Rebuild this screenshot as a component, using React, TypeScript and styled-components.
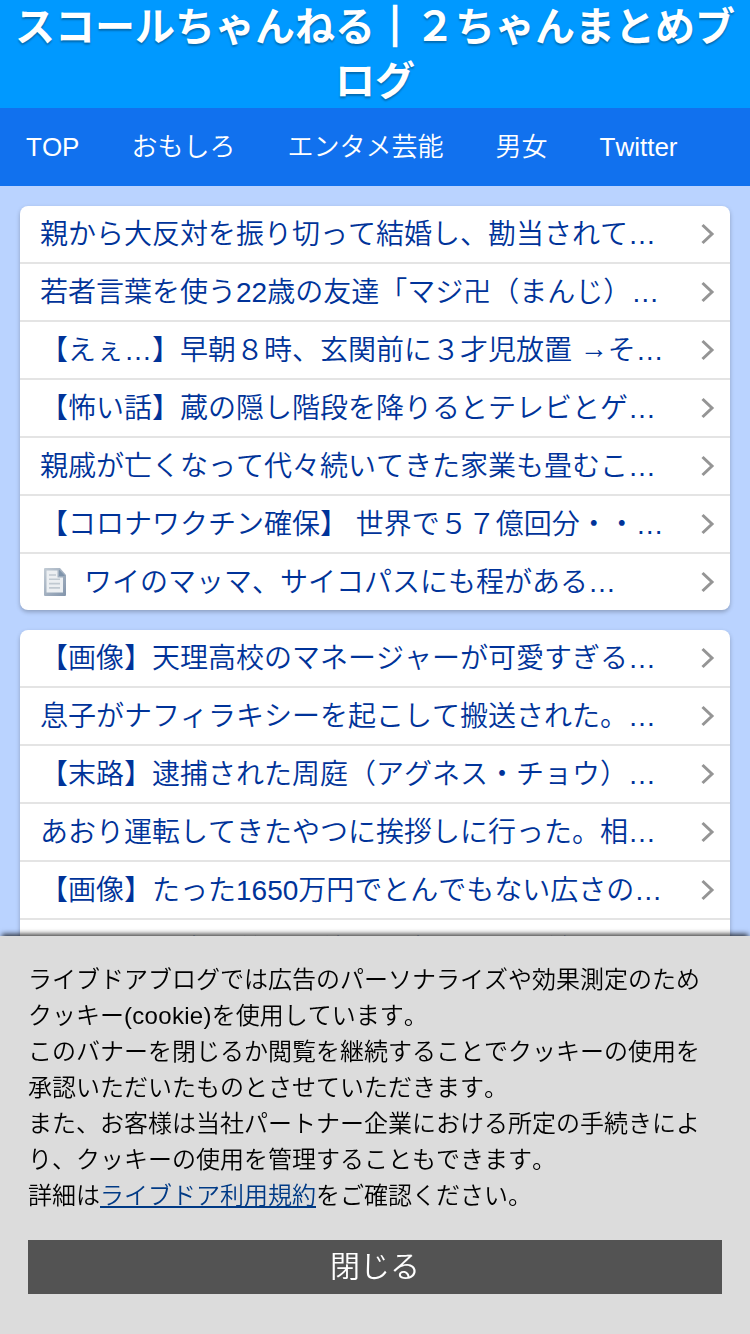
import React from 'react';
import styled, { createGlobalStyle } from 'styled-components';

const sans = '"Liberation Sans", "Noto Sans CJK JP", sans-serif';

const GlobalStyle = createGlobalStyle`
  html, body { margin: 0; height: 100%; overflow: hidden; }
  body {
    background: #bad3ff;
    font-family: ${sans};
    font-weight: 350;
    font-kerning: none;
    -webkit-text-size-adjust: 100%;
  }
`;

const Page = styled.div`
  height: 1334px;
  overflow: hidden;
`;

const Header = styled.header`
  background: #0099ff;
  height: 108px;
`;

const Title = styled.h1`
  margin: 0;
  color: #fff;
  font-size: 40px;
  line-height: 54px;
  font-weight: bold;
  text-align: center;
  text-shadow: 0 2px 2px rgba(0, 0, 0, 0.3);
`;

const Bar = styled.span`
  -webkit-text-stroke: 2.5px #fff;
`;

const Nav = styled.nav`
  display: flex;
  height: 78px;
  background: #1171ee;
`;

const NavLink = styled.a`
  padding: 0 26px;
  color: #fff;
  font-size: 26px;
  line-height: 78px;
  white-space: nowrap;
`;

const Main = styled.main`
  display: flex;
  flex-direction: column;
  gap: 20px;
  padding: 20px;
`;

const List = styled.ul`
  margin: 0;
  padding: 0;
  list-style: none;
  border-radius: 8px;
  background: #fff;
  box-shadow: 0 2px 4px rgba(0, 0, 0, 0.25);
`;

const Row = styled.li`
  display: flex;
  align-items: center;
  height: 56px;
  padding: 0 14px 0 20px;
  color: #003399;
  & + & { border-top: 2px solid #e4e4e4; }
`;

const RowText = styled.span<{ $low?: boolean }>`
  flex: 1;
  padding-top: ${(p) => (p.$low ? 5 : 2)}px;
  font-size: 28px;
  line-height: 54px;
  white-space: pre;
`;

const Arrow = styled.span`
  position: relative;
  top: -2px;
`;

const DocIcon = styled.svg`
  flex: none;
  margin-right: 14px;
`;

const Banner = styled.aside`
  position: fixed;
  left: 0;
  right: 0;
  bottom: 0;
  height: 398px;
  box-sizing: border-box;
  padding: 26px 28px 40px;
  background: #dcdcdc;
  box-shadow: 0 -4px 5px -2px rgba(0, 0, 0, 0.75);
  color: #000;
`;

const Notice = styled.p`
  margin: 0 0 26px;
  font-size: 24px;
  line-height: 36px;
`;

const Latin = styled.span`
  letter-spacing: 0.3px;
`;

const TermsLink = styled.a`
  color: #003a85;
  text-decoration: underline;
`;

const CloseButton = styled.button`
  display: block;
  width: 100%;
  height: 54px;
  padding: 0;
  border: 0;
  background: #535353;
  color: #fff;
  font: 350 30px/54px ${sans};
`;

const Chevron = () => (
  <svg width="16" height="22" viewBox="0 0 16 22" fill="none">
    <path d="M2.5 2L12 11L2.5 20" stroke="#959595" strokeWidth="3" />
  </svg>
);

const Document = () => (
  <DocIcon width="30" height="30" viewBox="0 0 30 30">
    <defs>
      <linearGradient id="paper" x1="0" y1="0" x2="1" y2="1">
        <stop offset="0" stopColor="#c3ccd5" />
        <stop offset="1" stopColor="#8294ab" />
      </linearGradient>
    </defs>
    <path d="M5 1H20L26 8V28Q26 29 25 29H5Q4 29 4 28V2Q4 1 5 1Z" fill="url(#paper)" />
    <path d="M6.5 3.5H17.5V10.5H23V25.5H6.5Z" fill="#eceff2" />
    <path d="M19 2.5L25 9H19Z" fill="#7f94ab" />
    <path d="M9 8H16M9 12.3H20M9 16.6H20M9 20.9H20" stroke="#c0c9d1" strokeWidth="1.6" />
  </DocIcon>
);

const navItems = ['TOP', 'おもしろ', 'エンタメ芸能', '男女', 'Twitter'];

type Entry = { text: React.ReactNode; icon?: boolean; low?: boolean };

const lists: Entry[][] = [
  [
    { text: '親から大反対を振り切って結婚し、勘当されて…' },
    { text: '若者言葉を使う22歳の友達「マジ卍（まんじ）…' },
    { text: <>【えぇ…】早朝８時、玄関前に３才児放置 <Arrow>→</Arrow>そ…</> },
    { text: '【怖い話】蔵の隠し階段を降りるとテレビとゲ…' },
    { text: '親戚が亡くなって代々続いてきた家業も畳むこ…' },
    { text: '【コロナワクチン確保】 世界で５７億回分・・…' },
    { text: 'ワイのマッマ、サイコパスにも程がある…', icon: true },
  ],
  [
    { text: '【画像】天理高校のマネージャーが可愛すぎる…' },
    { text: '息子がナフィラキシーを起こして搬送された。…' },
    { text: '【末路】逮捕された周庭（アグネス・チョウ）…' },
    { text: 'あおり運転してきたやつに挨拶しに行った。相…' },
    { text: '【画像】たった1650万円でとんでもない広さの…' },
    { text: 'うちのこと家の義母と彼には実はその日前も…', low: true },
  ],
];

export default function App() {
  return (
    <Page>
      <GlobalStyle />
      <Header>
        <Title>
          スコールちゃんねる<Bar>｜</Bar>２ちゃんまとめブログ
        </Title>
      </Header>
      <Nav>
        {navItems.map((item) => (
          <NavLink key={item}>{item}</NavLink>
        ))}
      </Nav>
      <Main>
        {lists.map((entries, i) => (
          <List key={i}>
            {entries.map((entry, j) => (
              <Row key={j}>
                {entry.icon && <Document />}
                <RowText $low={entry.low}>{entry.text}</RowText>
                <Chevron />
              </Row>
            ))}
          </List>
        ))}
      </Main>
      <Banner>
        <Notice>
          ライブドアブログでは広告のパーソナライズや効果測定のためクッキー<Latin>(cookie)</Latin>を使用しています。
          <br />
          このバナーを閉じるか閲覧を継続することでクッキーの使用を承認いただいたものとさせていただきます。
          <br />
          また、お客様は当社パートナー企業における所定の手続きにより、クッキーの使用を管理することもできます。
          <br />
          詳細は<TermsLink>ライブドア利用規約</TermsLink>をご確認ください。
        </Notice>
        <CloseButton>閉じる</CloseButton>
      </Banner>
    </Page>
  );
}
